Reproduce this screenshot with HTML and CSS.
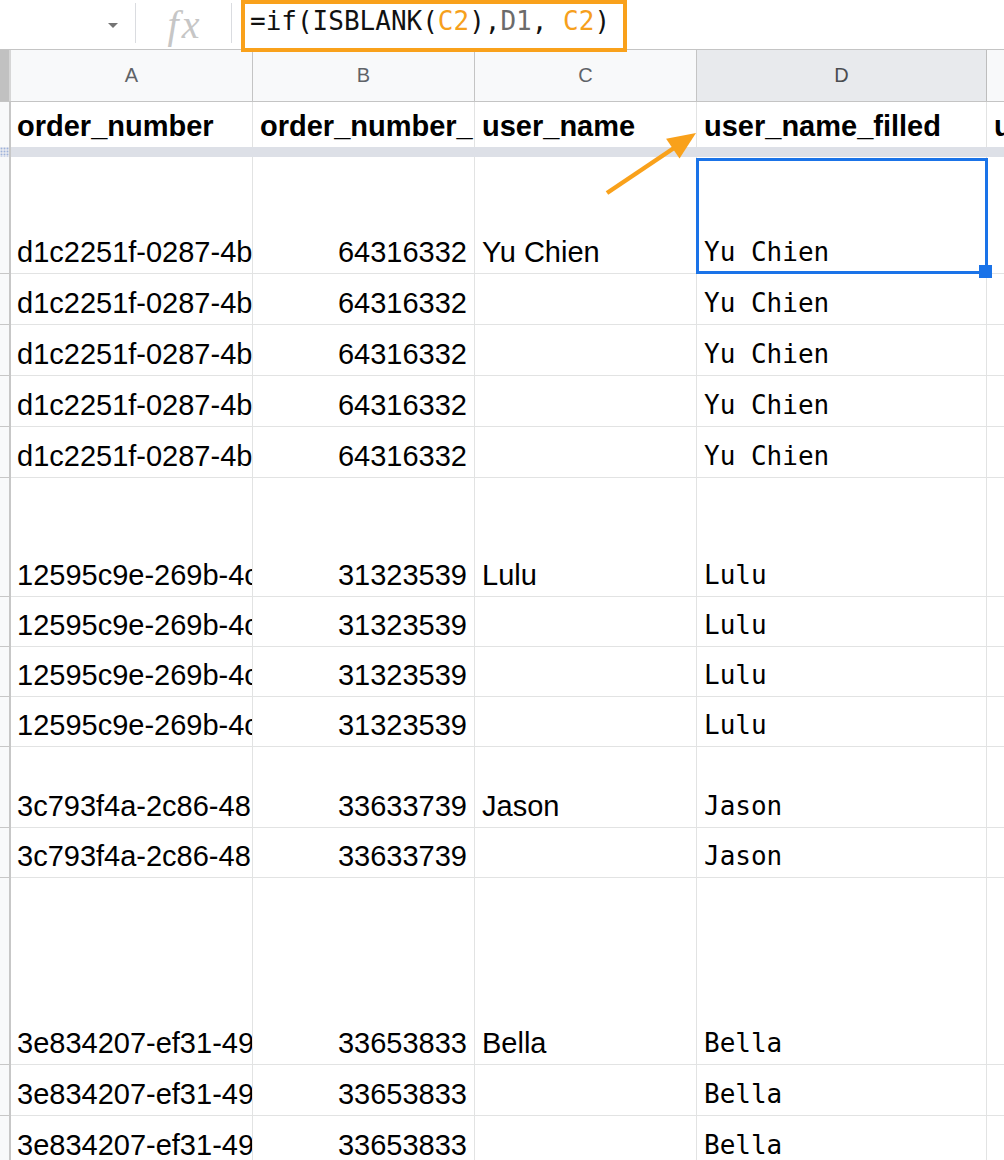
FILE: index.html
```html
<!DOCTYPE html>
<html lang="en">
<head>
<meta charset="utf-8">
<title>Sheet</title>
<link rel="stylesheet" href="styles.css">
</head>
<body>
<div class="formula-bar">
  <div class="namebox"><span class="caret"></span></div>
  <div class="sep"></div>
  <div class="fx">fx</div>
  <div class="sep"></div>
  <div class="formula">=if(ISBLANK(<span class="ref-c">C2</span>),<span class="ref-d">D1</span>, <span class="ref-c">C2</span>)</div>
</div>

<div class="sheet">
  <div class="row colhead">
    <div class="corner"></div>
    <div class="hc">A</div>
    <div class="hc">B</div>
    <div class="hc">C</div>
    <div class="hc hc-sel">D</div>
    <div class="hc hc-last"></div>
  </div>

  <div class="row r-head">
    <div class="gut"></div>
    <div class="cell bold">order_number</div>
    <div class="cell bold">order_number_</div>
    <div class="cell bold">user_name</div>
    <div class="cell bold">user_name_filled</div>
    <div class="cell bold last">u</div>
  </div>

  <div class="row band">
    <div class="gut-band"></div>
    <div class="band-fill"></div>
  </div>

  <div class="row r-117">
    <div class="gut"></div>
    <div class="cell">d1c2251f-0287-4b</div>
    <div class="cell num">64316332</div>
    <div class="cell">Yu Chien</div>
    <div class="cell mono selected">Yu Chien<span class="selbox"></span><span class="handle"></span></div>
    <div class="cell last"></div>
  </div>
  <div class="row r-51">
    <div class="gut"></div>
    <div class="cell">d1c2251f-0287-4b</div>
    <div class="cell num">64316332</div>
    <div class="cell"></div>
    <div class="cell mono">Yu Chien</div>
    <div class="cell last"></div>
  </div>
  <div class="row r-51">
    <div class="gut"></div>
    <div class="cell">d1c2251f-0287-4b</div>
    <div class="cell num">64316332</div>
    <div class="cell"></div>
    <div class="cell mono">Yu Chien</div>
    <div class="cell last"></div>
  </div>
  <div class="row r-51">
    <div class="gut"></div>
    <div class="cell">d1c2251f-0287-4b</div>
    <div class="cell num">64316332</div>
    <div class="cell"></div>
    <div class="cell mono">Yu Chien</div>
    <div class="cell last"></div>
  </div>
  <div class="row r-51">
    <div class="gut"></div>
    <div class="cell">d1c2251f-0287-4b</div>
    <div class="cell num">64316332</div>
    <div class="cell"></div>
    <div class="cell mono">Yu Chien</div>
    <div class="cell last"></div>
  </div>

  <div class="row r-120">
    <div class="gut"></div>
    <div class="cell">12595c9e-269b-4c</div>
    <div class="cell num">31323539</div>
    <div class="cell">Lulu</div>
    <div class="cell mono">Lulu</div>
    <div class="cell last"></div>
  </div>
  <div class="row r-50">
    <div class="gut"></div>
    <div class="cell">12595c9e-269b-4c</div>
    <div class="cell num">31323539</div>
    <div class="cell"></div>
    <div class="cell mono">Lulu</div>
    <div class="cell last"></div>
  </div>
  <div class="row r-50">
    <div class="gut"></div>
    <div class="cell">12595c9e-269b-4c</div>
    <div class="cell num">31323539</div>
    <div class="cell"></div>
    <div class="cell mono">Lulu</div>
    <div class="cell last"></div>
  </div>
  <div class="row r-50">
    <div class="gut"></div>
    <div class="cell">12595c9e-269b-4c</div>
    <div class="cell num">31323539</div>
    <div class="cell"></div>
    <div class="cell mono">Lulu</div>
    <div class="cell last"></div>
  </div>

  <div class="row r-81">
    <div class="gut"></div>
    <div class="cell">3c793f4a-2c86-48</div>
    <div class="cell num">33633739</div>
    <div class="cell">Jason</div>
    <div class="cell mono">Jason</div>
    <div class="cell last"></div>
  </div>
  <div class="row r-50">
    <div class="gut"></div>
    <div class="cell">3c793f4a-2c86-48</div>
    <div class="cell num">33633739</div>
    <div class="cell"></div>
    <div class="cell mono">Jason</div>
    <div class="cell last"></div>
  </div>

  <div class="row r-187">
    <div class="gut"></div>
    <div class="cell">3e834207-ef31-49</div>
    <div class="cell num">33653833</div>
    <div class="cell">Bella</div>
    <div class="cell mono">Bella</div>
    <div class="cell last"></div>
  </div>
  <div class="row r-51">
    <div class="gut"></div>
    <div class="cell">3e834207-ef31-49</div>
    <div class="cell num">33653833</div>
    <div class="cell"></div>
    <div class="cell mono">Bella</div>
    <div class="cell last"></div>
  </div>
  <div class="row r-51">
    <div class="gut"></div>
    <div class="cell">3e834207-ef31-49</div>
    <div class="cell num">33653833</div>
    <div class="cell"></div>
    <div class="cell mono">Bella</div>
    <div class="cell last"></div>
  </div>
</div>

<div class="annot-box"></div>
<svg class="annot-arrow" width="100" height="75" viewBox="600 125 100 75" aria-hidden="true">
  <line x1="607" y1="193" x2="674" y2="148" stroke="#f9a11b" stroke-width="4.5"/>
  <polygon points="696,133 679.5,158.6 666.1,138.7" fill="#f9a11b"/>
</svg>
</body>
</html>
```

FILE: styles.css
```css
* { box-sizing: border-box; }

html, body {
  margin: 0;
  padding: 0;
  overflow: hidden;
  background: #ffffff;
}

body {
  width: 1004px;
  height: 1160px;
  position: relative;
  font-family: "Liberation Sans", Arial, sans-serif;
  color: #000000;
}

/* ---------- formula bar ---------- */
.formula-bar {
  display: flex;
  align-items: flex-start;
  height: 49px;
}

.namebox {
  width: 135px;
  height: 49px;
  display: flex;
  align-items: center;
  justify-content: flex-end;
  padding-right: 17px;
}

.caret {
  width: 0;
  height: 0;
  border-left: 5px solid transparent;
  border-right: 5px solid transparent;
  border-top: 5px solid #747474;
  margin-top: 1px;
}

.sep {
  width: 1px;
  height: 40px;
  margin-top: 3px;
  background: #dadce0;
}

.fx {
  width: 95px;
  height: 49px;
  text-align: center;
  font-family: "Liberation Serif", "Times New Roman", serif;
  font-style: italic;
  font-size: 40px;
  line-height: 49px;
  color: #c6c6c6;
  letter-spacing: 3px;
  padding-left: 3px;
}

.formula {
  padding: 6px 0 0 18px;
  font-family: "DejaVu Sans Mono", monospace;
  font-size: 26px;
  line-height: 30px;
  white-space: nowrap;
  color: #111111;
}

.ref-c { color: #f6a01c; }
.ref-d { color: #6b6b6b; }

/* ---------- sheet ---------- */
.row {
  display: grid;
  grid-template-columns: 11px 242px 222px 222px 290px 1fr;
}

.colhead {
  height: 53px;
  border-top: 1px solid #c4c4c4;
  border-bottom: 1px solid #c4c4c4;
}

.corner {
  background: #c1c1c1;
  border-right: 2px solid #d6d6d6;
}

.hc {
  display: flex;
  align-items: center;
  justify-content: center;
  background: #f8f9fa;
  border-right: 1px solid #c4c4c4;
  color: #5f6368;
  font-size: 20px;
}

.hc-sel {
  background: #e8eaed;
  color: #4a4d51;
  border-right-color: #bdbdbd;
}

.hc-last { border-right: none; }

.r-head { height: 45px; }
.r-head .cell { border-bottom: none; padding-bottom: 4px; }
.r-head .gut { border-bottom: none; }

.band { height: 10px; }
.gut-band {
  background-color: #e3e6ee;
  background-image: radial-gradient(#9fb3da 0.8px, transparent 1.1px);
  background-size: 3px 3px;
  border-right: 2px solid #c7c7c7;
}
.band-fill {
  grid-column: 2 / -1;
  background: #dde0e7;
}

.r-117 { height: 117px; }
.r-120 { height: 119px; }
.r-81 { height: 81px; }
.r-187 { height: 187px; }
.r-51 { height: 51px; }
.r-50 { height: 50px; }

.gut {
  background: #f8f9fa;
  border-right: 2px solid #c7c7c7;
  border-bottom: 1px solid #c7c7c7;
}

.cell {
  display: flex;
  align-items: flex-end;
  min-width: 0;
  padding: 0 7px 4px 6px;
  border-right: 1px solid #e2e3e3;
  border-bottom: 1px solid #e2e3e3;
  font-size: 29px;
  line-height: 33px;
  white-space: nowrap;
  overflow: hidden;
}

.cell + .cell { padding-left: 7px; }

.bold { font-weight: bold; }

.num { justify-content: flex-end; }

.mono {
  font-family: "DejaVu Sans Mono", monospace;
  font-size: 26px;
  padding-bottom: 4px;
}

.last { border-right: none; }

/* selected cell */
.selected {
  position: relative;
  overflow: visible;
}

.selbox {
  position: absolute;
  left: -1px;
  top: 1px;
  right: -2px;
  bottom: -1px;
  border: 3px solid #1a73e8;
  z-index: 2;
}

.handle {
  position: absolute;
  right: -6px;
  bottom: -5px;
  width: 13px;
  height: 13px;
  background: #1a73e8;
  z-index: 3;
}

/* ---------- annotations ---------- */
.annot-box {
  position: absolute;
  left: 241px;
  top: 0;
  width: 386px;
  height: 52px;
  border: 4px solid #f9a11b;
}

.annot-arrow {
  position: absolute;
  left: 600px;
  top: 125px;
  overflow: visible;
}
```
